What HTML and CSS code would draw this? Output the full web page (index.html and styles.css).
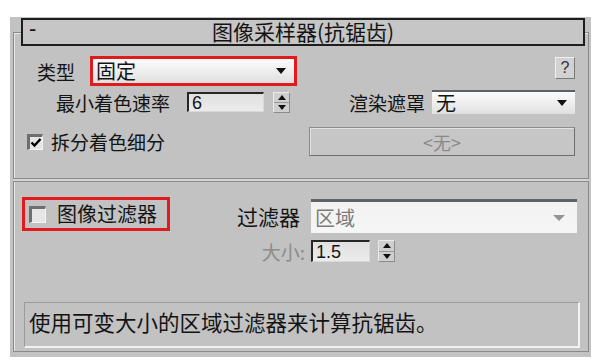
FILE: index.html
```html
<!DOCTYPE html>
<html lang="zh-CN">
<head>
   <meta charset="UTF-8">
   <meta name="viewport" content="width=device-width, initial-scale=1.0">
   <title>图像采样器(抗锯齿)</title>
   <link rel="stylesheet" href="styles.css">
</head>
<body>
   <div class="panel">
      <div class="rollout-title">
         <span class="toggle">-</span>
         <span class="title">图像采样器(抗锯齿)</span>
         <span></span>
      </div>
      <div class="rollout-body">
         <div class="row row-type">
            <span class="label label-type">类型</span>
            <div class="highlight highlight-combo">
               <div class="combo combo-plain">
                  <span class="combo-text">固定</span>
                  <span class="arrow"></span>
               </div>
            </div>
            <button class="help">?</button>
         </div>
         <div class="row row-rate">
            <span class="label label-rate">最小着色速率</span>
            <div class="field field-rate">6</div>
            <div class="spin">
               <span class="spin-btn"><span class="tri-up"></span></span>
               <span class="spin-btn"><span class="tri-down"></span></span>
            </div>
            <span class="label label-mask">渲染遮罩</span>
            <div class="combo combo-mask">
               <span class="combo-text">无</span>
               <span class="arrow"></span>
            </div>
         </div>
         <div class="row row-split">
            <span class="check checked">
               <svg width="12" height="11" viewBox="0 0 12 11"><path d="M1.5 5.5 L4.5 8.5 L10.5 2" fill="none" stroke="#000" stroke-width="2.4"/></svg>
            </span>
            <span class="label label-split">拆分着色细分</span>
            <button class="pick" disabled>&lt;无&gt;</button>
         </div>

         <div class="separator"></div>

         <div class="row row-filter">
            <div class="highlight highlight-check">
               <span class="check"></span>
               <span class="label label-filter-on">图像过滤器</span>
            </div>
            <span class="label label-filter">过滤器</span>
            <div class="combo combo-disabled">
               <span class="combo-text">区域</span>
               <span class="arrow"></span>
            </div>
         </div>
         <div class="row row-size">
            <span class="label label-size">大小:</span>
            <div class="field field-size">1.5</div>
            <div class="spin spin-size">
               <span class="spin-btn"><span class="tri-up"></span></span>
               <span class="spin-btn"><span class="tri-down"></span></span>
            </div>
         </div>

         <div class="desc">使用可变大小的区域过滤器来计算抗锯齿。</div>
      </div>
   </div>
</body>
</html>
```

FILE: styles.css
```css
body {
   margin: 0;
   background-color: #fff;
   font-family: "Noto Sans CJK SC", sans-serif;
   color: #141414;
}
.panel {
   margin: 17px 0 0 10px;
   width: 581px;
   padding: 1px 0 5px;
   background-color: #c2c2c2;
}

/* rollout header */
.rollout-title {
   position: relative;
   z-index: 1;
   margin-left: 11px;
   width: 564px;
   height: 28px;
   box-sizing: border-box;
   border: 2px solid #1e1e1e;
   background-color: #c6c6c6;
   display: grid;
   grid-template-columns: 30px 1fr 30px;
   align-items: center;
   font-size: 21px;
   line-height: 1;
}
.toggle {
   padding-left: 6px;
   font-family: "Liberation Sans", sans-serif;
   font-size: 22px;
   margin-top: -6px;
}
.title {
   text-align: center;
   margin-top: -1px;
}

.rollout-body {
   margin: -14px 0 0 3px;
   width: 576px;
   box-sizing: border-box;
   border: 1px solid #8a8a8a;
   box-shadow: inset 1px 1px 0 #e6e6e6;
   padding-bottom: 3px;
}

.row {
   display: flex;
   align-items: center;
}
.label {
   font-size: 19px;
   line-height: 1;
   white-space: nowrap;
}

/* row 1 */
.row-type {
   margin-top: 23px;
   height: 30px;
}
.label-type {
   margin-left: 23px;
   width: 53px;
}
.highlight {
   box-sizing: border-box;
   border: 3px solid #e11b1d;
}
.highlight-combo {
   width: 207px;
   height: 30px;
}
.combo {
   box-sizing: border-box;
   display: flex;
   align-items: center;
   justify-content: space-between;
   padding: 0 8px 0 4px;
   background: linear-gradient(#fcfcfc, #e0e0e0);
   font-size: 20px;
   line-height: 1;
}
.combo-plain {
   height: 100%;
   padding-left: 3px;
}
.arrow {
   width: 0;
   height: 0;
   border-left: 5px solid transparent;
   border-right: 5px solid transparent;
   border-top: 6px solid #111;
}
.help {
   align-self: flex-start;
   margin: 1px 13px 0 auto;
   width: 20px;
   height: 22px;
   padding: 0;
   background-color: #d2d2d2;
   border: 1px solid;
   border-color: #f0f0f0 #7a7a7a #7a7a7a #f0f0f0;
   font-family: "Liberation Sans", sans-serif;
   font-size: 16px;
   color: #333;
}

/* row 2 */
.row-rate {
   margin-top: 4px;
   height: 24px;
}
.label-rate {
   width: 156px;
   text-align: right;
}
.field {
   box-sizing: border-box;
   background: linear-gradient(#e0e0e0, #ececec);
   border-style: solid;
   border-width: 2px 1px 1px 2px;
   border-color: #262626 #d8d8d8 #d8d8d8 #262626;
   font-family: "Liberation Sans", sans-serif;
   font-size: 18px;
   line-height: 1;
   padding: 0 3px;
   display: flex;
   align-items: center;
}
.field-rate {
   margin-left: 17px;
   width: 77px;
   height: 20px;
}
.spin {
   margin-left: 9px;
   width: 17px;
   height: 21px;
   display: flex;
   flex-direction: column;
   background-color: #cfcfcf;
   box-sizing: border-box;
   border: 1px solid;
   border-color: #eaeaea #8c8c8c #8c8c8c #eaeaea;
}
.spin-btn {
   flex: 1;
   display: flex;
   align-items: center;
   justify-content: center;
}
.spin-btn + .spin-btn {
   border-top: 1px solid #9a9a9a;
}
.tri-up, .tri-down {
   width: 0;
   height: 0;
   border-left: 4px solid transparent;
   border-right: 4px solid transparent;
}
.tri-up {
   border-bottom: 5px solid #111;
}
.tri-down {
   border-top: 5px solid #111;
}
.label-mask {
   width: 135px;
   text-align: right;
}
.combo-mask {
   margin-left: 7px;
   width: 143px;
   height: 24px;
   border-top: 2px solid #5d6165;
}

/* row 3 */
.row-split {
   margin-top: 13px;
   height: 29px;
}
.check {
   box-sizing: border-box;
   width: 16px;
   height: 16px;
   margin-left: 13px;
   background-color: #e6e6e6;
   border-style: solid;
   border-width: 3px 1px 1px 3px;
   border-color: #6e6e6e #f4f4f4 #f4f4f4 #6e6e6e;
   display: flex;
   align-items: center;
   justify-content: center;
}
.label-split {
   margin-left: 8px;
}
.pick {
   margin: 0 13px 0 auto;
   width: 266px;
   height: 29px;
   padding: 0;
   background-color: #c6c6c6;
   border: 1px solid;
   border-color: #8c8c8c #6e6e6e #6e6e6e #8c8c8c;
   box-shadow: inset 1px 1px 0 #e2e2e2;
   font-family: "Noto Sans CJK SC", sans-serif;
   font-size: 18px;
   color: #8a8a8a;
}

.separator {
   margin: 22px -1px 0;
   height: 2px;
   border-top: 1px solid #8a8a8a;
   border-bottom: 1px solid #8a8a8a;
   background-color: #d4d4d4;
}

/* row 4 */
.row-filter {
   margin-top: 15px;
   height: 37px;
   align-items: flex-start;
}
.highlight-check {
   margin-left: 8px;
   width: 148px;
   height: 34px;
   display: flex;
   align-items: center;
}
.highlight-check .check {
   margin-left: 4px;
   width: 17px;
   height: 17px;
}
.label-filter-on {
   margin-left: 11px;
   font-size: 20px;
}
.label-filter {
   align-self: center;
   width: 130px;
   text-align: right;
   margin-top: 2px;
   font-size: 21px;
}
.combo-disabled {
   margin: 2px 0 0 11px;
   width: 266px;
   height: 34px;
   border-top: 3px solid #5f6367;
   background: linear-gradient(#f2f2f2, #f6f6f6);
   color: #7c7c7c;
   padding-right: 12px;
}
.combo-disabled .arrow {
   border-top-color: #959595;
   border-left-width: 6px;
   border-right-width: 6px;
}

/* row 5 */
.row-size {
   margin-top: 5px;
   height: 24px;
}
.label-size {
   width: 291px;
   text-align: right;
   color: #8c8c8c;
}
.field-size {
   margin-left: 6px;
   width: 59px;
   height: 22px;
}
.spin-size {
   margin-left: 8px;
   height: 22px;
}

.desc {
   margin: 39px 0 0 10px;
   width: 556px;
   height: 46px;
   box-sizing: border-box;
   border-style: solid;
   border-width: 1px 2px 2px 1px;
   border-color: #9c9c9c #f2f2f2 #f2f2f2 #9c9c9c;
   padding: 8px 4px 0;
   font-size: 21.5px;
   line-height: 1;
}
```
